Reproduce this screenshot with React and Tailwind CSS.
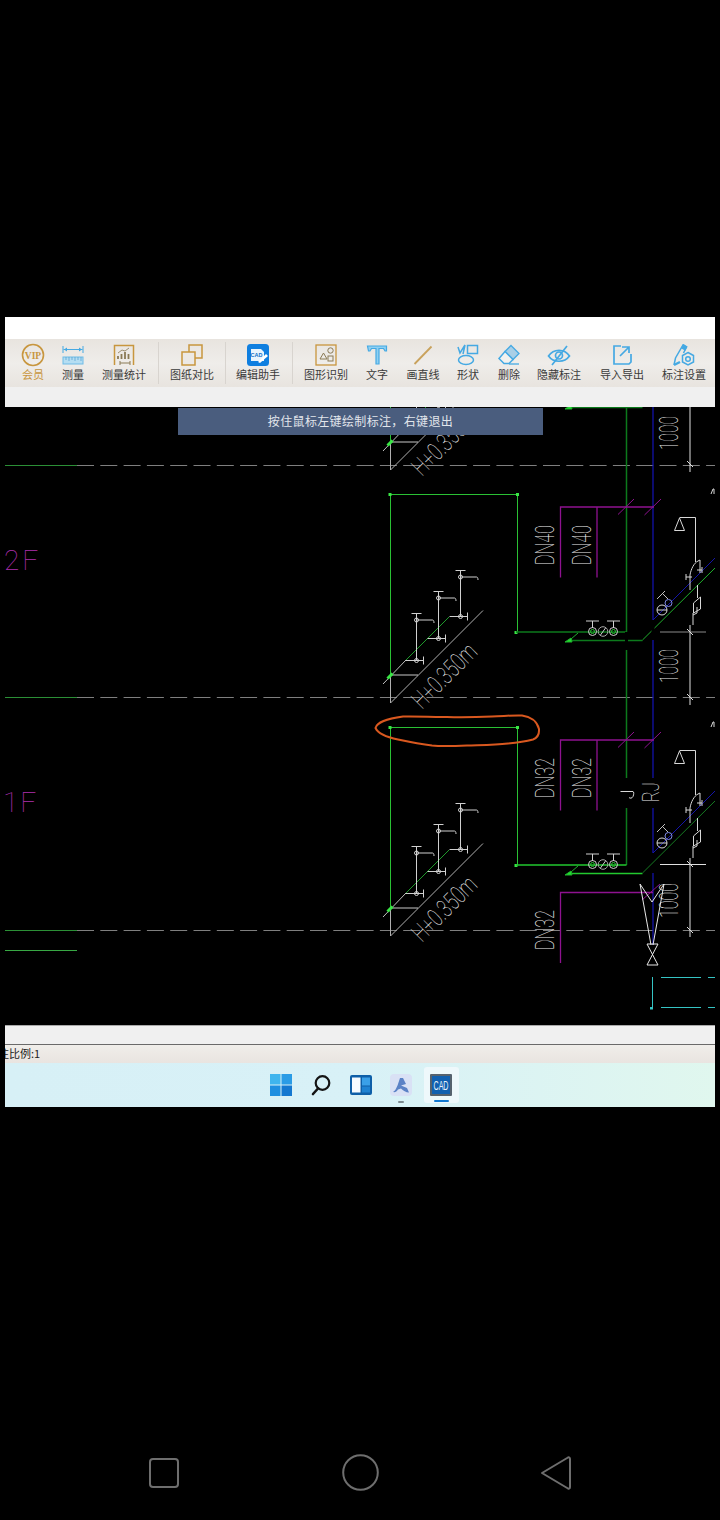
import React from 'react';

const gold = '#c8963e';
const sky = '#45a9e3';

const VipIcon = () => (
    <svg width="24" height="24" viewBox="0 0 24 24" fill="none">
        <circle cx="12" cy="12" r="10.500" stroke={gold} strokeWidth="1.600" />
        <text x="12" y="15.500" textAnchor="middle" fontSize="9.500" fontWeight="700" fill={gold} className="font-['Liberation_Serif']">VIP</text>
    </svg>
);

const RulerIcon = () => (
    <svg width="24" height="24" viewBox="0 0 24 24" fill="none">
        <path d="M2 3v7M22 3v7M2.500 6.500h19" stroke={sky} strokeWidth="1" />
        <path d="M3 6.500l3-2v4zM21 6.500l-3-2v4z" fill={sky} />
        <rect x="2" y="14" width="20" height="7" fill="#b5def2" stroke="#6fbbe6" />
        <path d="M5 14v3M8 14v4M11 14v3M14 14v4M17 14v3M20 14v4" stroke="#4f9fd2" strokeWidth="0.700" />
    </svg>
);

const StatsIcon = () => (
    <svg width="24" height="24" viewBox="0 0 24 24" fill="none">
        <path d="M2.500 22V2.500h19V22" stroke={gold} strokeWidth="1.500" />
        <path d="M6 13v3M9.500 11v5M13 9v7M16.500 11v5" stroke="#8a7a55" strokeWidth="1.800" />
        <path d="M6 10l4-3 3 1 4-3" stroke="#8a7a55" strokeWidth="0.800" />
        <path d="M8 18v4M18 18v4M8 20h10" stroke="#8a7a55" strokeWidth="1" />
    </svg>
);

const CompareIcon = () => (
    <svg width="24" height="24" viewBox="0 0 24 24" fill="none">
        <rect x="9" y="2" width="13" height="13" stroke={gold} strokeWidth="1.500" />
        <rect x="2" y="9" width="13" height="13" fill="#ece9e5" stroke={gold} strokeWidth="1.500" />
    </svg>
);

const EditorIcon = () => (
    <svg width="24" height="24" viewBox="0 0 24 24" fill="none">
        <rect x="1" y="1" width="22" height="22" rx="3.500" fill="#0f7fe0" />
        <path d="M5 6h10l3 3v9H5z" fill="#e8f4fd" />
        <text x="10.500" y="14" textAnchor="middle" fontSize="5.500" fontWeight="700" fill="#0f6fc8" className="font-['Liberation_Sans']">CAD</text>
        <path d="M12 19l8-8 2 2-8 7z" fill="#ffffff" />
    </svg>
);

const ShapesIcon = () => (
    <svg width="24" height="24" viewBox="0 0 24 24" fill="none">
        <rect x="2" y="2" width="20" height="20" stroke={gold} strokeWidth="1.300" />
        <path d="M6 16l3.500-6 3.500 6z" stroke="#8a7a55" />
        <circle cx="16.500" cy="7.500" r="2.700" stroke="#8a7a55" />
        <rect x="14" y="13" width="5" height="5" stroke="#8a7a55" />
    </svg>
);

const TextIcon = () => (
    <svg width="24" height="24" viewBox="0 0 24 24" fill="none">
        <path d="M2.500 3h19v5h-1.500l-1.500-2.500h-4.500V21h-3V5.500H6.500L5 8H3.500z" fill="#8fd0f2" stroke={sky} strokeWidth="1.200" />
    </svg>
);

const LineIcon = () => (
    <svg width="24" height="24" viewBox="0 0 24 24" fill="none">
        <path d="M3.500 21L20.500 3.500" stroke="#c9a25c" strokeWidth="1.800" />
    </svg>
);

const ShapeToolIcon = () => (
    <svg width="24" height="24" viewBox="0 0 24 24" fill="none" stroke={sky} strokeWidth="1.500">
        <rect x="11.500" y="2.500" width="10" height="8" />
        <path d="M2 4l2 6 5-8-2 9" />
        <ellipse cx="10" cy="17" rx="7.500" ry="4.500" />
    </svg>
);

const EraserIcon = () => (
    <svg width="24" height="24" viewBox="0 0 24 24" fill="none">
        <path d="M14 2.500l8 8-6 6-8-8z" fill="#a9cfe6" stroke={sky} strokeWidth="1.300" />
        <path d="M8 8.500l8 8-4 4H7l-5-5z" fill="#f3f2ef" stroke={sky} strokeWidth="1.500" />
        <path d="M12 21h10" stroke={sky} strokeWidth="1.300" />
    </svg>
);

const EyeIcon = () => (
    <svg width="24" height="24" viewBox="0 0 24 24" fill="none" stroke={sky} strokeWidth="1.700">
        <path d="M1.500 13c5-7.500 16-7.500 21 0-5 7-16 7-21 0z" />
        <circle cx="12" cy="12.500" r="3.500" />
        <path d="M5 22L20 3" />
    </svg>
);

const ExportIcon = () => (
    <svg width="24" height="24" viewBox="0 0 24 24" fill="none" stroke={sky} strokeWidth="1.700">
        <path d="M11 3H4v18h15l2-2v-8" />
        <path d="M10 13l9-9M12 4h7v6" />
    </svg>
);

const SettingsIcon = () => (
    <svg width="24" height="24" viewBox="0 0 24 24" fill="none" stroke={sky} strokeWidth="1.500">
        <path d="M2 22l1.500-7L11 2l3.500 2-3 6" />
        <path d="M2 22l6-3" strokeWidth="2.500" />
        <path d="M11.500 2l3 1.800-1.500 3-3-1.800z" fill={sky} />
        <path d="M16 9.500l5.500 3v6.500L16 22l-5.500-3v-6.500z" />
        <circle cx="16" cy="16" r="2.300" />
    </svg>
);

const tools = [
    { label: '会员', icon: <VipIcon />, width: 'w-[40px]', color: 'text-[#c8963e]' },
    { label: '测量', icon: <RulerIcon />, width: 'w-[40px]' },
    { label: '测量统计', icon: <StatsIcon />, width: 'w-[62px]' },
    { sep: true, width: 'w-[7px]' },
    { label: '图纸对比', icon: <CompareIcon />, width: 'w-[60px]' },
    { sep: true, width: 'w-[6px]' },
    { label: '编辑助手', icon: <EditorIcon />, width: 'w-[60px]' },
    { sep: true, width: 'w-[8px]' },
    { label: '图形识别', icon: <ShapesIcon />, width: 'w-[60px]' },
    { label: '文字', icon: <TextIcon />, width: 'w-[42px]' },
    { label: '画直线', icon: <LineIcon />, width: 'w-[50px]' },
    { label: '形状', icon: <ShapeToolIcon />, width: 'w-[40px]' },
    { label: '删除', icon: <EraserIcon />, width: 'w-[42px]' },
    { label: '隐藏标注', icon: <EyeIcon />, width: 'w-[58px]' },
    { label: '导入导出', icon: <ExportIcon />, width: 'w-[68px]' },
    { label: '标注设置', icon: <SettingsIcon />, width: 'w-[56px]' },
];

const Toolbar = () => (
    <div className="flex h-[48px] pl-[8px] bg-gradient-to-b from-[#e8e4df] via-[#efedea] to-[#e8e4df] font-['Noto_Sans_CJK_SC',sans-serif]">
        {tools.map((tool, i) =>
            tool.sep ? (
                <div key={i} className={`${tool.width} flex justify-center py-[3px]`}>
                    <div className="w-px bg-[#d8d4cf]" />
                </div>
            ) : (
                <div key={i} className={`${tool.width} flex flex-col items-center pt-[4px]`}>
                    {tool.icon}
                    <span className={`text-[11px] leading-[14px] whitespace-nowrap ${tool.color || 'text-[#3a3a3a]'}`}>{tool.label}</span>
                </div>
            )
        )}
    </div>
);

const CadText = ({ x, y, rotate = -90, size = 25, length, fill = '#f0f0f0', spacing, children }) => (
    <text
        transform={`translate(${x} ${y}) rotate(${rotate})`}
        fontSize={size}
        textLength={length}
        lengthAdjust={length ? 'spacingAndGlyphs' : undefined}
        letterSpacing={spacing}
        fill={fill}
        className="font-['Roboto',sans-serif] font-thin opacity-[0.99]"
    >
        {children}
    </text>
);

// faucet with its stop valve, x is the riser
const Faucet = ({ x, top, bottom }) => (
    <g fill="none" stroke="#d0d0d0" strokeWidth="1">
        <path d={`M${x - 5} ${top}h10M${x} ${top}V${bottom}`} />
        <circle cx={x} cy={top + 6.500} r="2" />
        <path d={`M${x} ${top + 6.500}h16c1 0 1.500 1 1.500 3`} />
        <path d={`M${x - 11} ${bottom}h18M${x + 7} ${bottom - 4}v8`} />
        <circle cx={x} cy={bottom} r="2" />
    </g>
);

// one floor of the riser diagram, repeated every 233px
const Floor = ({ dy, bright, dimension = true, labels }) => {
    const pipe = bright ? '#22c92f' : '#0c7a1c';
    return (
        <g transform={`translate(0 ${dy})`}>
            <path d="M390.500 675V494.500H517.500V632" fill="none" stroke="#2ac034" strokeWidth="1" />
            <path d="M390.500 675V703L483 610.500" fill="none" stroke="#b0b0b0" strokeWidth="1" />
            <path d="M390.500 675H418" fill="none" stroke="#c8c8c8" strokeWidth="1" />
            <path d="M383 684L406 660" fill="none" stroke="#c0c0c0" strokeWidth="1" />
            <path d="M406 660L449 617" fill="none" stroke="#1f9a2c" strokeWidth="1" />
            <path d="M387.500 678.500l5-5" stroke="#39e645" strokeWidth="3" />
            <rect x="388.500" y="493" width="3" height="3" fill="#39e645" />
            <rect x="516" y="493" width="3" height="3" fill="#39e645" />
            <rect x="514.500" y="631" width="3" height="3" fill="#39e645" />

            <Faucet x={416.500} top={613.500} bottom={660.500} />
            <Faucet x={438.500} top={591.500} bottom={638.500} />
            <Faucet x={460.500} top={570.500} bottom={616.500} />

            <CadText x={422} y={710} rotate={-45} length={80}>H+0.350m</CadText>

            {/* risers */}
            <path d="M653 407V620" stroke="#1414b8" strokeWidth="1.200" />
            <path d="M653 620L716 557" stroke="#1414a8" strokeWidth="1" />
            <path d="M626.500 632V407" stroke="#0c7a1c" strokeWidth="1.500" />
            <path d="M516 632H626.500" stroke={pipe} strokeWidth="1.500" />
            <path d="M568 640.500H642.500" stroke={pipe} strokeWidth="1.500" />
            <path d="M642.500 640L716 567" stroke={bright ? '#157a22' : '#1fb02c'} strokeWidth="1" />
            <path d="M565 642l6-4 1 4zM571 639l7-6" fill="#22e030" stroke="#1fb02c" />

            {/* valve group */}
            <g fill="none" stroke="#d0d0d0" strokeWidth="1">
                <path d="M586 621h13M592.500 621v7M607 621h13M613.500 621v7" />
                <circle cx="592.500" cy="631.500" r="4" />
                <circle cx="613.500" cy="631.500" r="4" />
                <circle cx="603" cy="631.500" r="4.800" stroke="#a8a8a8" />
                <path d="M600.500 635l5-7" />
            </g>
            <circle cx="592.500" cy="631.500" r="2" fill="none" stroke="#2ac034" />
            <circle cx="613.500" cy="631.500" r="2" fill="none" stroke="#2ac034" />

            {/* magenta branches */}
            <path d="M560.500 577.500V507H654M597 507V577.500" fill="none" stroke="#8e1290" strokeWidth="1.300" />
            <path d="M618 514.500L634 499M644.500 515L661 499" stroke="#8e1290" strokeWidth="1" />
            {labels && <CadText x={554} y={565} length={40}>{labels}</CadText>}
            {labels && <CadText x={591} y={565} length={40}>{labels}</CadText>}

            {/* shower */}
            <g fill="none" stroke="#d8d8d8" strokeWidth="1">
                <path d="M674.500 530.500L679.500 518L684.500 530.500z" />
                <path d="M679.500 517.500H695.500V562" />
                <path d="M690 590V575c1-6 4-12 8-14l2-1V573" />
                <path d="M686 577h6M686 574v6M697 570h5M702 567v6" />
                <path d="M697.500 585v13" />
                <path d="M693.500 603l7-6v12l-7 4zM693 613v12M697 607v6l-4 2" />
                <path d="M657 599l8-8M662 593l6 6" stroke="#c0c0c0" />
                <circle cx="662" cy="610" r="5" />
                <path d="M657 610h10" />
            </g>
            <circle cx="668.500" cy="603" r="3.500" fill="none" stroke="#7f8ae6" />

            {/* level dimension */}
            {dimension && (
                <g>
                    <path d="M690 625V705" stroke="#e0e0e0" strokeWidth="1" />
                    <path d="M660 632H706" stroke="#8a8a8a" strokeWidth="1.200" />
                    <path d="M687 629l6 6M687 694l6 6" stroke="#e0e0e0" strokeWidth="1" />
                    <CadText x={678} y={683} length={34}>1000</CadText>
                </g>
            )}
            <path d="M711 494l2-5h1v5" fill="none" stroke="#d8d8d8" strokeWidth="1" />
        </g>
    );
};

const Drawing = () => (
    <svg width="710" height="618" viewBox="5 407 710 618" className="block">
        {/* level lines */}
        <g strokeWidth="1">
            <path d="M5 465.500H77M5 697.500H77M5 930.500H77" stroke="#2b8f36" />
            <path d="M5 950.500H77" stroke="#38a844" />
            <path d="M77 465.500H715M77 697.500H715M77 930.500H715" stroke="#7f7f7f" strokeDasharray="17 6.300" />
        </g>

        <Floor dy={-233} />
        <Floor dy={0} labels="DN40" />
        <Floor dy={233} bright labels="DN32" dimension={false} />

        {/* gap on the risers below 2F */}
        <path d="M626.500 632V650" stroke="#000" strokeWidth="3" />
        <path d="M653 620.500V639" stroke="#000" strokeWidth="3" />

        {/* riser text and gaps on 1F */}
        <rect x="618" y="778" width="45" height="30" fill="#000" />
        <path d="M620.500 791.500H633c1 0 1 3 0 5-1 2-3 2-4 1" fill="none" stroke="#d8d8d8" strokeWidth="1" />
        <CadText x={659} y={802} length={20} size={24}>RJ</CadText>

        {/* bottom run on 1F */}
        <path d="M653 873V945" stroke="#1414b8" strokeWidth="1.200" />
        <path d="M560.500 963V892.500H653" fill="none" stroke="#8e1290" strokeWidth="1.300" />
        <path d="M642 900L660 884" stroke="#8e1290" strokeWidth="1" />
        <CadText x={554} y={950} length={40}>DN32</CadText>
        <g fill="none" stroke="#e8e8e8" strokeWidth="1">
            <path d="M640 884L652 902L664 884M640 884L651 945M664 884L653 945" />
            <path d="M647 944h11l-11 21h11z" />
        </g>
        <path d="M690 858V937" stroke="#e0e0e0" strokeWidth="1" />
        <path d="M660 864.500H706" stroke="#e0e0e0" strokeWidth="1" />
        <path d="M687 861l6 6M687 927l6 6" stroke="#e0e0e0" strokeWidth="1" />
        <CadText x={678} y={918} length={35}>1000</CadText>

        {/* teal run */}
        <path d="M652.500 1008V977" stroke="#35c4c4" strokeWidth="1" />
        <path d="M661 977.500H715M661 1007.500H715" stroke="#35c4c4" strokeWidth="1" strokeDasharray="40 7" />
        <rect x="650" y="1007" width="3" height="2.500" fill="#35c4c4" />

        {/* hand drawn markup */}
        <path
            d="M375.500 728C377 722 386 719 403 716.500C420 716 435 717.500 447 717C465 717.500 480 717 492 716.500C505 716 515 715 522 715.500C530 716.500 537 721 539 729C539.500 735 537 738 533 739.500C525 741.500 518 742.500 508 743.500C495 745 482 745 467 745.500C455 746 442 746.500 432 745.500C420 744 410 742 398 739.500C388 737.500 378 733.500 375.500 728Z"
            fill="none"
            stroke="#d9581f"
            strokeWidth="2"
        />

        {/* floor marks */}
        <CadText x={4} y={570} rotate={0} size={28} spacing={3} fill="#b030b0">2F</CadText>
        <CadText x={3} y={812} rotate={0} size={28} spacing={2} fill="#b030b0">1F</CadText>
    </svg>
);

const WinIcon = () => (
    <svg width="22" height="22" viewBox="0 0 22 22">
        <rect x="0" y="0" width="10.500" height="10.500" fill="#3fb5ee" />
        <rect x="11.500" y="0" width="10.500" height="10.500" fill="#2a9ce6" />
        <rect x="0" y="11.500" width="10.500" height="10.500" fill="#1f8fe0" />
        <rect x="11.500" y="11.500" width="10.500" height="10.500" fill="#1478d0" />
    </svg>
);

const SearchIcon = () => (
    <svg width="20" height="22" viewBox="0 0 20 22" fill="none" stroke="#141414">
        <circle cx="11.500" cy="9" r="6.800" strokeWidth="2.200" />
        <path d="M7 14.500L2 20" strokeWidth="2.600" strokeLinecap="round" />
    </svg>
);

const WidgetsIcon = () => (
    <svg width="22" height="20" viewBox="0 0 22 20">
        <rect x="0" y="0" width="22" height="20" rx="2" fill="#0e5fa8" />
        <rect x="2" y="2.500" width="8.500" height="15" fill="#f6fbff" />
        <rect x="12" y="2.500" width="8" height="8" fill="#3aa0e8" />
        <rect x="12" y="11.500" width="8" height="6" fill="#1e82d2" />
    </svg>
);

const AppAIcon = () => (
    <svg width="22" height="22" viewBox="0 0 22 22">
        <rect x="0" y="0" width="22" height="22" rx="4" fill="#d9e1f5" />
        <path d="M3 18c2-1 3-3 4.500-6.500L10 4h3l3 6-5 1.500 6 2.500 2 4.500c-3 0-6-2-8-4l-3 1c-1 2-3 3-5 2.500z" fill="#5b82c6" />
    </svg>
);

const CadIcon = () => (
    <svg width="22" height="22" viewBox="0 0 22 22">
        <rect x="0" y="0" width="22" height="22" rx="1" fill="#56626e" />
        <rect x="2" y="2" width="18" height="18" fill="#1160b0" />
        <text x="11" y="15.500" textAnchor="middle" fontSize="12" textLength="15" lengthAdjust="spacingAndGlyphs" fill="#e6f2fb" className="font-['Liberation_Sans']">CAD</text>
    </svg>
);

const TaskItem = ({ children, dot, active }) => (
    <div className="relative w-[40px] h-[36px] flex items-center justify-center">
        {active && <span className="absolute left-[3px] top-0 w-[35px] h-[36px] rounded-[3px] bg-[#eef8fb]" />}
        <span className="relative flex">{children}</span>
        {dot && <span className="absolute bottom-[0px] left-[17px] w-[6px] h-[2px] rounded-full bg-[#7d8a90]" />}
        {active && <span className="absolute bottom-[1px] left-[13px] w-[15px] h-[2px] rounded-full bg-[#1078d0]" />}
    </div>
);

const BottomBars = () => (
    <>
        <div className="h-[20px] bg-[#f0f0f0] border-t border-b border-t-[#a9a9a9] border-b-[#6a6a6a]" />
        <div className="h-[18px] overflow-hidden bg-gradient-to-b from-[#f0eeea] to-[#e9e4e0] text-[11px] leading-[17px] text-[#222] -indent-[18px] font-['Noto_Sans_CJK_SC',sans-serif]">
            标注比例:1
        </div>
        <div className="h-[44px] flex items-center justify-center pl-[2px] bg-gradient-to-r from-[#d7f0f6] via-[#d8f1f7] to-[#e0f7ee]">
            <TaskItem><WinIcon /></TaskItem>
            <TaskItem><SearchIcon /></TaskItem>
            <TaskItem><WidgetsIcon /></TaskItem>
            <TaskItem dot><AppAIcon /></TaskItem>
            <TaskItem active><CadIcon /></TaskItem>
        </div>
    </>
);

const NavBar = () => (
    <div className="mt-[347px] px-[149px] flex items-center justify-between">
        <svg width="30" height="30" viewBox="0 0 30 30" fill="none" stroke="#6e6e6e" strokeWidth="2">
            <rect x="1" y="1" width="28" height="28" rx="3" />
        </svg>
        <svg width="37" height="37" viewBox="0 0 37 37" fill="none" stroke="#6e6e6e" strokeWidth="2">
            <circle cx="18.500" cy="18.500" r="17.300" />
        </svg>
        <svg width="30" height="34" viewBox="0 0 30 34" fill="none" stroke="#6e6e6e" strokeWidth="2" strokeLinejoin="round">
            <path d="M1 17L27 1.500C28 1 29 1.500 29 3V31C29 32.500 28 33 27 32.500Z" />
        </svg>
    </div>
);

const App = () => {
    return (
        <div className="w-[720px] h-[1520px] bg-black overflow-hidden pt-[317px]">
            <div className="mx-[5px]">
                <div className="h-[22px] bg-white" />
                <Toolbar />
                <div className="h-[20px] bg-[#f0f0f0]" />
                <div className="relative h-[618px] overflow-hidden bg-black">
                    <Drawing />
                    <div className="absolute left-[173px] top-[1px] w-[365px] h-[27px] flex items-center justify-center pb-[2px] bg-[#4a5d7e] text-[12px] tracking-[0.35px] text-[#e2e6ec] font-['Noto_Sans_CJK_SC',sans-serif]">
                        按住鼠标左键绘制标注，右键退出
                    </div>
                </div>
                <BottomBars />
            </div>
            <NavBar />
        </div>
    );
};

export default App;
